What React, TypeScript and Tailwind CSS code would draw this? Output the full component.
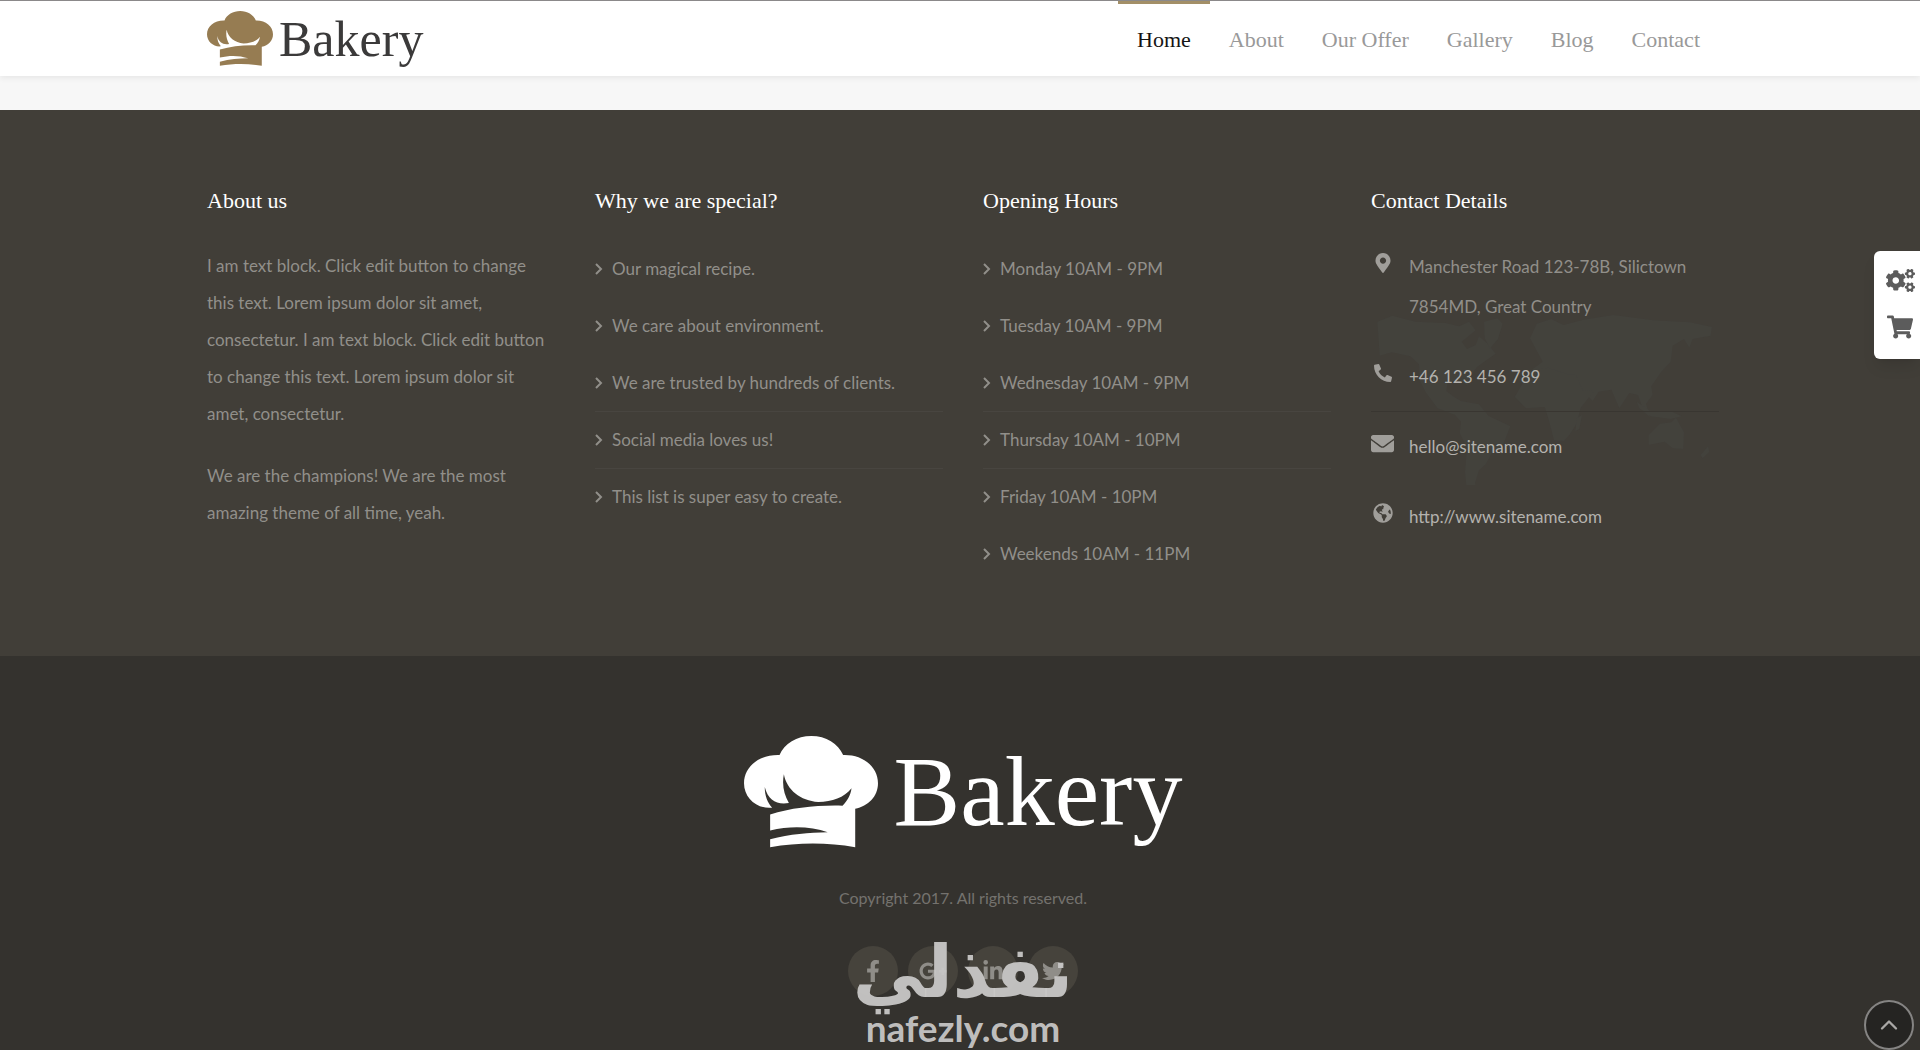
import type { ReactNode } from 'react';
import { ChevronUp } from 'lucide-react';
import { FaCogs, FaEnvelope, FaFacebookF, FaGlobeAmericas, FaGooglePlusG, FaLinkedinIn, FaMapMarkerAlt, FaPhone, FaShoppingCart, FaTwitter } from 'react-icons/fa';

const navItems = ['Home', 'About', 'Our Offer', 'Gallery', 'Blog', 'Contact'];

const reasons = [
  'Our magical recipe.',
  'We care about environment.',
  'We are trusted by hundreds of clients.',
  'Social media loves us!',
  'This list is super easy to create.',
];

const hours = [
  'Monday 10AM - 9PM',
  'Tuesday 10AM - 9PM',
  'Wednesday 10AM - 9PM',
  'Thursday 10AM - 10PM',
  'Friday 10AM - 10PM',
  'Weekends 10AM - 11PM',
];

const socials = [
  { name: 'Facebook', icon: <FaFacebookF /> },
  { name: 'Google Plus', icon: <FaGooglePlusG className="size-7" /> },
  { name: 'LinkedIn', icon: <FaLinkedinIn /> },
  { name: 'Twitter', icon: <FaTwitter /> },
];

function ChefHat({ className }: { className: string }) {
  return (
    <svg viewBox="0 0 400 334" className={className} fill="currentColor" aria-hidden="true">
      <path d="M106 57C120 22 158 0 201 0c44 0 80 22 95 57 58-2 104 34 104 84 0 40-29 68-68 76v115c-82-15-170-15-254 0v-24c60-16 116-20 172-21-50-17-110-20-172-5v-48c66-20 140-28 216-26 14-14 24-30 27-52-22 28-58 40-99 41-54-4-94-36-103-83-6 32 0 60 15 86-36 6-62-8-72-48 0 26 8 46 22 62C40 219 0 186 0 141c0-50 46-86 106-84z" />
    </svg>
  );
}

function FooterColumn({ title, children }: { title: string; children: ReactNode }) {
  return (
    <section>
      <h3 className="font-['Liberation_Serif',serif] text-[22px] leading-8 text-white">{title}</h3>
      {children}
    </section>
  );
}

function ArrowList({ items }: { items: string[] }) {
  return (
    <ul className="mt-6">
      {items.map((item, index) => (
        <li
          key={item}
          className={`flex h-[57px] items-center gap-[9px] border-b ${index === 2 || index === 3 ? 'border-[#484540]' : 'border-transparent'}`}
        >
          <svg viewBox="0 0 8 14" className="h-3.5 w-2" fill="none" stroke="#918f8a" strokeWidth="2" aria-hidden="true">
            <path d="M1 2L6 7 1 12" />
          </svg>
          {item}
        </li>
      ))}
    </ul>
  );
}

function WorldMap() {
  return (
    <svg viewBox="75 430 1020 510" className="absolute top-[98px] left-1 w-[340px] text-[#44443f] opacity-70" fill="currentColor" aria-hidden="true">
      {/* Americas */}
      <path d="M82 450l45-18 70 18 90 4 40 10 30-14 20 26-42 34 16 22 26-12 10-26 26 22 24 30-26 18-30 22-22 30-6 26-24-18-36 8-4 26 20 16 24 14 54 10 28 34 66 32-22 56-32 22-20 36-20 18-12 38 6 22-32-14-4-40 6-74-22-44 4-34-18-20-52-20-36-48-18-36-2-48-26-24-56-12-36 10z" />
      <path d="M402 450l40-10 16 16-14 46-24 28-16-30z" />
      {/* Europe and Asia */}
      <path d="M540 500l20-44 44-14 36 18 60-16 90-14 120 16 110 6 66 14-4 26-54 10-10 26-16-26-34 20-6 48-28 30-30 44 4 26-20 26 12 40-18-14-18-52-26-6-30 46-24-56-38 6-18 28-24-24-34-22-34-8-14-22-50-2-26 14 2-32 30-22z" />
      {/* Africa */}
      <path d="M540 598l54-10 52 18 32 4 20 46 34 2-40 50-12 48-22 34-16 18-30-2-16-62-12-38-56 4-34-34z" />
      <path d="M680 740l16-10-8 42-12 6z" />
      {/* Oceania */}
      <path d="M860 690l40 28 66 2 30 14-34 8-60-8-34-24zM896 790l34-34 34-4 14-14 24 44-2 50-32-2-24-20-48 10zM1052 850l22-26 4 16-20 20z" />
    </svg>
  );
}

function ContactRow({ icon, children, className = '' }: { icon: ReactNode; children: ReactNode; className?: string }) {
  return (
    <li className={`grid grid-cols-[23px_1fr] gap-[15px] border-b pt-[15px] pb-[14px] leading-10 ${className}`}>
      <span className="flex h-8 items-center justify-center text-[20px] text-[#a09e9a]">{icon}</span>
      {children}
    </li>
  );
}

export default function App() {
  return (
    <div className="flex min-h-screen flex-col bg-[#34322e] font-[Lato,sans-serif] text-[17px] text-[#918f8a]">
      <header className="relative z-10 border-t border-[#8b898a] bg-white pl-1.5 shadow-[0_2px_6px_rgba(0,0,0,0.07)]">
        <div className="mx-auto flex h-[75px] max-w-[1512px] items-start justify-between">
          <a href="#home" className="flex h-full items-center gap-1.5 text-[#967c52]">
            <ChefHat className="w-[66px]" />
            <span className="font-['Liberation_Serif',serif] text-[50px] leading-none text-[#3b3a3a]">Bakery</span>
          </a>
          <nav className="flex font-['Liberation_Serif',serif] text-[22px] text-[#999]">
            {navItems.map((item, index) => (
              <a
                key={item}
                href="#"
                className={`border-t-3 px-[19px] pt-[18px] leading-9 ${index === 0 ? 'border-[#a38f67] text-[#151515]' : 'border-transparent'}`}
              >
                {item}
              </a>
            ))}
          </nav>
        </div>
      </header>

      <div className="h-[34px] bg-[#f7f7f7]" />

      <footer className="flex grow flex-col">
        <div className="bg-[#413e38] pt-[75px] pb-[67px] pl-1.5">
          <div className="mx-auto grid min-h-[404px] max-w-[1512px] grid-cols-4 gap-10">
            <FooterColumn title="About us">
              <div className="mt-[30px] leading-[37px]">
                <p>I am text block. Click edit button to change this text. Lorem ipsum dolor sit amet, consectetur. I am text block. Click edit button to change this text. Lorem ipsum dolor sit amet, consectetur.</p>
                <p className="mt-[25px]">We are the champions! We are the most amazing theme of all time, yeah.</p>
              </div>
            </FooterColumn>
            <FooterColumn title="Why we are special?">
              <ArrowList items={reasons} />
            </FooterColumn>
            <FooterColumn title="Opening Hours">
              <ArrowList items={hours} />
            </FooterColumn>
            <FooterColumn title="Contact Details">
              <address className="relative not-italic">
                <WorldMap />
                <ul className="relative pt-[15px]">
                  <ContactRow icon={<FaMapMarkerAlt />} className="border-transparent">
                    <span>Manchester Road 123-78B, Silictown 7854MD, Great Country</span>
                  </ContactRow>
                  <ContactRow icon={<FaPhone className="size-[18px] -scale-x-100" />} className="border-[#393631]">
                    <a href="tel:+46123456789" className="text-[#b4b2ae]">+46 123 456 789</a>
                  </ContactRow>
                  <ContactRow icon={<FaEnvelope className="size-[23px]" />} className="border-transparent">
                    <a href="mailto:hello@sitename.com" className="text-[#b4b2ae]">hello@sitename.com</a>
                  </ContactRow>
                  <ContactRow icon={<FaGlobeAmericas />} className="border-transparent">
                    <a href="http://www.sitename.com" className="text-[#b4b2ae]">http://www.sitename.com</a>
                  </ContactRow>
                </ul>
              </address>
            </FooterColumn>
          </div>
        </div>

        <div className="flex grow flex-col items-center pt-20 pl-1.5">
          <div className="flex items-center gap-4 text-white">
            <ChefHat className="w-[134px]" />
            <span className="font-['Liberation_Serif',serif] text-[100px] leading-[112px]">Bakery</span>
          </div>
          <p className="mt-[34px] text-[16px] leading-8 text-[#74726e]">Copyright 2017. All rights reserved.</p>
          <div className="relative mt-8">
            <div className="flex gap-2.5">
              {socials.map((social) => (
                <a
                  key={social.name}
                  href="#"
                  aria-label={social.name}
                  className="flex size-[50px] items-center justify-center rounded-full bg-[#46433c] text-[22px] text-[#8f8d88]"
                >
                  {social.icon}
                </a>
              ))}
            </div>
            <div className="absolute inset-x-0 -top-2.5 text-center text-[#c8c7c6]/95">
              <div lang="ar" dir="rtl" className="font-['DejaVu_Sans',sans-serif] text-[72px] leading-[72px] font-bold">نفذلي</div>
              <div className="text-[37px] leading-10 font-bold">nafezly.com</div>
            </div>
          </div>
        </div>
      </footer>

      <aside className="fixed top-[251px] right-0 z-20 flex h-[108px] w-[46px] flex-col items-center justify-center gap-[19px] rounded-l-md bg-white pb-1 pl-1.5 text-[#5c5c5c] shadow-lg">
        <button aria-label="Settings"><FaCogs className="size-[29px]" /></button>
        <button aria-label="Cart"><FaShoppingCart className="size-[26px]" /></button>
      </aside>

      <button
        aria-label="Back to top"
        className="fixed right-1.5 bottom-0 z-20 flex size-[50px] items-center justify-center rounded-full border-2 border-[#858483] bg-[#252422] text-[#aaa8a6]"
      >
        <ChevronUp size={28} />
      </button>
    </div>
  );
}
